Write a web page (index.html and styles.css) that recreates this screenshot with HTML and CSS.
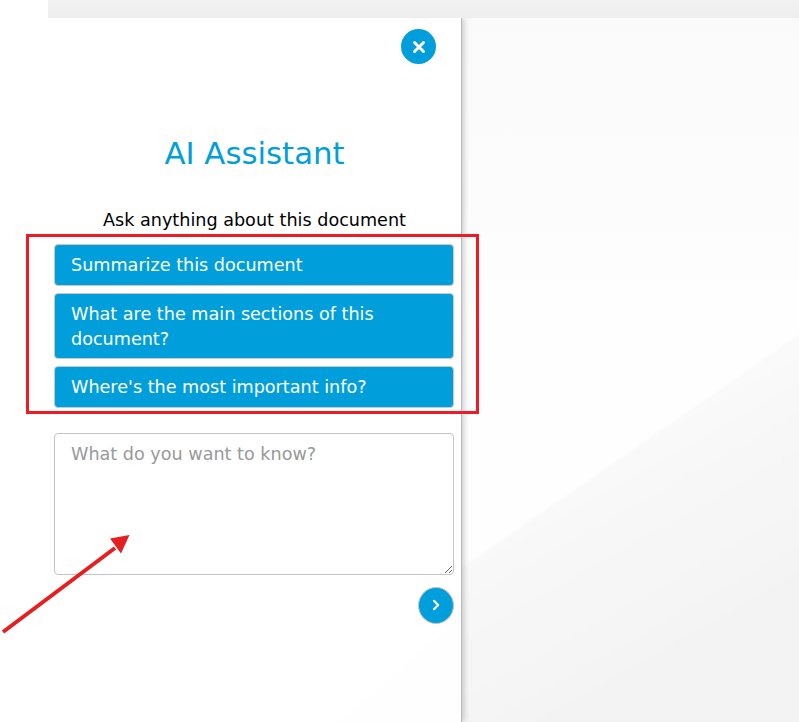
FILE: index.html
```html
<!DOCTYPE html>
<html lang="en">
<head>
<meta charset="utf-8">
<title>AI Assistant</title>
<link rel="stylesheet" href="styles.css">
</head>
<body>
<div class="viewer">
  <div class="topbar"></div>
  <div class="workspace">
    <aside class="panel">
      <div class="panel-head">
        <button class="round close" aria-label="Close">
          <svg width="14" height="14" viewBox="0 0 14 14"><path d="M2.5 2.5l9 9M11.5 2.5l-9 9" fill="none" stroke="#fff" stroke-width="3" stroke-linecap="round"/></svg>
        </button>
      </div>
      <h1 class="title">AI Assistant</h1>
      <p class="subtitle">Ask anything about this document</p>
      <div class="prompts">
        <button class="prompt">Summarize this document</button>
        <button class="prompt">What are the main sections of this document?</button>
        <button class="prompt">Where's the most important info?</button>
      </div>
      <textarea class="question" placeholder="What do you want to know?"></textarea>
      <div class="send-row">
        <button class="round send" aria-label="Send">
          <svg width="12" height="12" viewBox="0 0 12 12"><path d="M4 1.8L8.2 6 4 10.2" fill="none" stroke="#fff" stroke-width="2.2" stroke-linecap="round" stroke-linejoin="round"/></svg>
        </button>
      </div>
    </aside>
    <div class="canvas">
      <svg class="canvas-art" width="338" height="704" viewBox="0 0 338 704">
        <defs>
          <linearGradient id="wall" x1="0" y1="0" x2="0" y2="1">
            <stop offset="0" stop-color="#fafafa"/>
            <stop offset="0.45" stop-color="#fefefe"/>
            <stop offset="1" stop-color="#fefefe"/>
          </linearGradient>
          <linearGradient id="floor" x1="0" y1="0.4" x2="0.3" y2="1">
            <stop offset="0" stop-color="#fbfbfb"/>
            <stop offset="1" stop-color="#f3f3f3"/>
          </linearGradient>
          <filter id="soft" x="-5%" y="-5%" width="110%" height="110%"><feGaussianBlur stdDeviation="0.8"/></filter>
        </defs>
        <rect width="338" height="704" fill="url(#wall)"/>
        <path d="M-10 557L348 310V714H-10Z" fill="url(#floor)" filter="url(#soft)"/>
      </svg>
    </div>
  </div>
</div>
<div class="callout-box"></div>
<svg class="callout-arrow" width="140" height="110" viewBox="0 0 140 110">
  <path d="M3 98L115 14" fill="none" stroke="#e51f1f" stroke-width="4"/>
  <path d="M129.5 1L110 4.5L121 19.5Z" fill="#e51f1f"/>
</svg>
</body>
</html>
```
FILE: styles.css
```css
* { box-sizing: border-box; }
html, body { margin: 0; height: 100%; overflow: hidden; background: #fff; }
body { font-family: "DejaVu Sans", Verdana, sans-serif; position: relative; }
.viewer { margin-left: 48px; height: 722px; display: flex; flex-direction: column; }
.topbar { height: 18px; flex: none; background: linear-gradient(#f2f2f2, #eeeeee); }
.workspace { flex: 1; display: flex; min-height: 0; }
.panel { width: 413px; flex: none; background: linear-gradient(139deg, #fff 90%, #fefefe 90%); padding: 11px 7px 0; display: flex; flex-direction: column; align-items: stretch; position: relative; z-index: 1; box-shadow: 1px 0 0 #b9b9b9, 3px 0 6px rgba(0,0,0,.2); clip-path: inset(0 -12px 0 0); }
.panel-head { display: flex; justify-content: flex-end; padding-right: 18px; }
.round { border: 0; padding: 0; border-radius: 50%; background: #009fdb; display: flex; align-items: center; justify-content: center; }
.close { width: 35px; height: 35px; }
.title { margin: 65px 0 0; text-align: center; color: #009fdb; font-size: 30.8px; font-weight: 400; line-height: 48px; }
.subtitle { margin: 33px 0 0; text-align: center; color: #000; font-size: 17.6px; line-height: 21px; }
.prompts { margin: 13.3px 0 0 -1px; display: flex; flex-direction: column; gap: 7px; width: 400px; align-self: center; }
.prompt { display: block; width: 100%; border: 1px solid #c9c9c9; border-radius: 4px; background: #009fdb; color: #fff; font: 17.6px/25px "DejaVu Sans", Verdana, sans-serif; text-align: left; padding: 8px 16px 6.5px; }
.question { display: block; margin: 25.2px 0 0 -1px; width: 400px; height: 142px; align-self: center; border: 1px solid #c4c4c4; border-radius: 4px; padding: 8px 16px; font: 17.6px/25px "DejaVu Sans", Verdana, sans-serif; color: #333; background: #fff; }
.question::placeholder { color: #999; opacity: 1; }
.send-row { display: flex; justify-content: flex-end; margin-top: 12px; width: 400px; align-self: center; margin-left: -1px; }
.send { width: 36px; height: 37px; border: 1px solid #c4c4c4; }
.canvas { flex: 1; position: relative; background: #fff; overflow: hidden; }
.canvas-art { display: block; }
.callout-box { position: absolute; z-index: 2; left: 26px; top: 234px; width: 453px; height: 180px; border: 3px solid #ed1c24; }
.callout-arrow { position: absolute; z-index: 2; left: 0; top: 534px; }
```
